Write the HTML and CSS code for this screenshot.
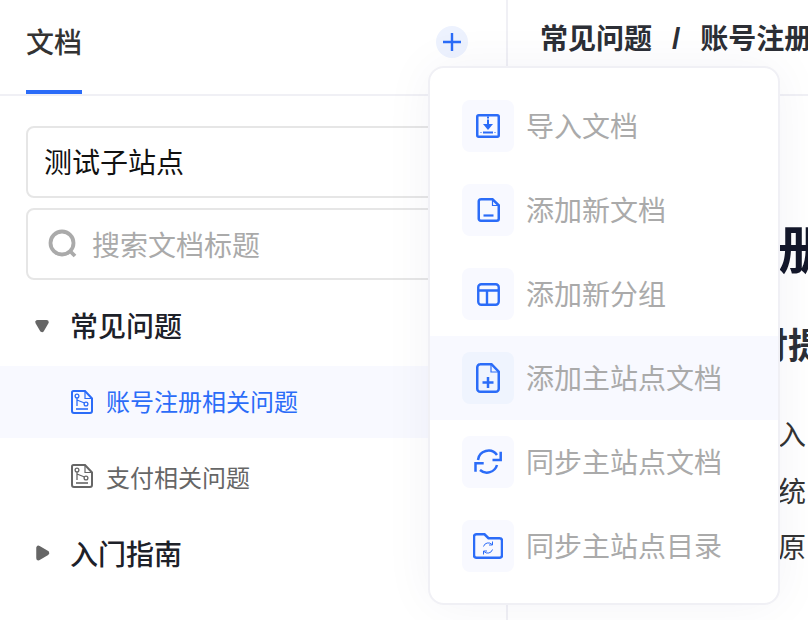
FILE: index.html
```html
<!DOCTYPE html>
<html lang="zh-CN">
<head>
<meta charset="utf-8">
<title>文档</title>
<link rel="stylesheet" href="styles.css">
</head>
<body>
<div class="app">
  <aside class="side">
    <header class="side-head">
      <div class="tab">文档</div>
      <button class="add" aria-label="添加">
        <svg width="18" height="18" viewBox="0 0 18 18"><path d="M9 0v18M0 9h18" stroke="#2b6cf8" stroke-width="2.400" fill="none"/></svg>
      </button>
    </header>
    <div class="filters">
      <div class="field field-site"><span class="label">测试子站点</span></div>
      <div class="field field-search">
        <svg width="30" height="30" viewBox="0 0 30 30"><circle cx="14" cy="14" r="11.500" stroke="#aaa" stroke-width="3.800" fill="none"/><path d="M22 22l5 5" stroke="#aaa" stroke-width="3.800" fill="none"/></svg>
        <span>搜索文档标题</span>
      </div>
    </div>
    <nav class="tree">
      <div class="group group-open">
        <svg class="caret caret-down" width="16" height="14" viewBox="0 0 16 14"><path d="M3.500 3.200h9L8 10.800z" fill="#666" stroke="#666" stroke-width="4.500" stroke-linejoin="round"/></svg>
        <span class="label-up-more">常见问题</span>
      </div>
      <div class="doc doc-active">
        <svg class="doc-icon" width="22" height="24" viewBox="0 0 22 24"><use href="#i-doc"/></svg>
        <span class="label-up">账号注册相关问题</span>
      </div>
      <div class="doc">
        <svg class="doc-icon" width="22" height="24" viewBox="0 0 22 24"><use href="#i-doc"/></svg>
        <span>支付相关问题</span>
      </div>
      <div class="group group-closed">
        <svg class="caret" width="16" height="18" viewBox="0 0 16 18"><path d="M3.500 3.800v10.400L12 9z" fill="#666" stroke="#666" stroke-width="4.500" stroke-linejoin="round"/></svg>
        <span>入门指南</span>
      </div>
    </nav>
  </aside>

  <main class="main">
    <header class="crumbs"><span>常见问题</span><span class="sep">/</span><span>账号注册相关问题</span></header>
    <article class="article">
      <h1>账号注册相关问题</h1>
      <h2>支付提示</h2>
      <p>入</p>
      <p>统</p>
      <p>原</p>
    </article>
  </main>

  <div class="menu">
    <div class="item">
      <span class="ico"><svg width="24" height="24" viewBox="0 0 24 24" fill="none" stroke="#2b6cf8" stroke-width="2.500"><rect x="1.250" y="1.250" width="21.500" height="21.500" rx="1.500"/><path d="M12 2.500v2M12 5.500v6" stroke-width="2"/><path d="M7 10h10l-5 6z" fill="#2b6cf8" stroke="none"/><path d="M7 18.500h10" stroke-width="2"/><path d="M4.500 18.500h1M18.500 18.500h1" stroke-width="1.200"/></svg></span>
      <span class="label">导入文档</span>
    </div>
    <div class="item">
      <span class="ico"><svg width="23" height="24" viewBox="0 0 23 24" fill="none" stroke="#2b6cf8" stroke-width="2.500"><path d="M3.500 1.250h12l6.250 6v13.500a2 2 0 0 1-2 2h-16a2 2 0 0 1-2-2v-17.500a2 2 0 0 1 2-2z"/><path d="M15.500 1.500v6h6" stroke-width="1.200"/><path d="M6.500 17.500h10" stroke-width="2.200"/></svg></span>
      <span class="label">添加新文档</span>
    </div>
    <div class="item">
      <span class="ico"><svg width="23" height="23" viewBox="0 0 23 23" fill="none" stroke="#2b6cf8" stroke-width="2.400"><rect x="1.250" y="1.250" width="20.500" height="20.500" rx="3"/><path d="M1.500 7.500h20M10 7.500V21.500"/></svg></span>
      <span class="label">添加新分组</span>
    </div>
    <div class="item item-hover">
      <span class="ico"><svg width="24" height="30" viewBox="0 0 24 30" fill="none" stroke="#2b6cf8" stroke-width="2.500"><path d="M4 1.250h11.500l7.250 7.500v17a3 3 0 0 1-3 3h-15.500a3 3 0 0 1-3-3v-21.500a3 3 0 0 1 3-3z"/><path d="M15 1.500v7.500h7.500" stroke-width="1.200"/><path d="M12 14v11M6.500 19.500h11"/></svg></span>
      <span class="label">添加主站点文档</span>
    </div>
    <div class="item">
      <span class="ico"><svg width="28" height="26" viewBox="0 0 28 26" fill="none" stroke="#2b6cf8" stroke-width="2.500"><path d="M4 11A10.500 10.500 0 0 1 23 6"/><path d="M23 16A10.500 10.500 0 0 1 6 21"/><path d="M26.700 2.700V11h-8.200"/><path d="M1.500 22.700v-8.400h8.200"/></svg></span>
      <span class="label">同步主站点文档</span>
    </div>
    <div class="item">
      <span class="ico"><svg width="30" height="26" viewBox="0 0 30 26" fill="none" stroke="#2b6cf8" stroke-width="2.500"><path d="M3.500 1.250h8l4 4h11a2.500 2.500 0 0 1 2.500 2.500v14.500a2.500 2.500 0 0 1-2.500 2.500h-23a2.500 2.500 0 0 1-2.500-2.500v-18.500a2.500 2.500 0 0 1 2.500-2.500z"/><path d="M10.500 13.500a5 5 0 0 1 8.500-2M19.500 16.500a5 5 0 0 1-8.500 2M19.500 8.500v3.500h-3.500M10.500 21.500v-3.500h3.500" stroke-width="1"/></svg></span>
      <span class="label">同步主站点目录</span>
    </div>
  </div>
</div>
<svg class="defs" width="0" height="0" aria-hidden="true">
  <symbol id="i-doc" viewBox="0 0 22 24">
    <g fill="none" stroke="currentColor">
      <path d="M2.500 1h11.500l7 7.500v12.500a2 2 0 0 1-2 2H3a2 2 0 0 1-2-2V2.500A1.500 1.500 0 0 1 2.500 1z" stroke-width="2"/>
      <path d="M14 1.500v7h6.500" stroke-width="1.200"/>
      <circle cx="6" cy="6" r="1.900" stroke-width="1.300"/>
      <circle cx="15" cy="14" r="1.900" stroke-width="1.300"/>
      <path d="M6 8v8M6 10l7.500 3" stroke-width="1.300"/>
      <path d="M5 19h12" stroke-width="1.600"/>
    </g>
  </symbol>
</svg>
</body>
</html>
```
FILE: styles.css
```css
* { box-sizing: border-box; }
html, body { margin: 0; height: 100%; }
body {
  width: 808px;
  height: 620px;
  overflow: hidden;
  background: #fff;
  font-family: "Noto Sans CJK SC", "Noto Sans", sans-serif;
}
.app { position: relative; display: flex; width: 808px; height: 620px; overflow: hidden; }
.side {
  flex: 0 0 508px;
  height: 620px;
  border-right: 2px solid #f0f0f5;
}
.side-head {
  display: flex;
  justify-content: space-between;
  height: 96px;
  padding: 0 38px 0 26px;
  border-bottom: 2px solid #f0f0f5;
}
.tab {
  width: 56px;
  height: 94px;
  padding-top: 21px;
  font-size: 28px;
  line-height: 40px;
  font-weight: 500;
  color: #333;
  border-bottom: 4px solid #2b6cf8;
}
.add {
  display: flex;
  align-items: center;
  justify-content: center;
  width: 32px;
  height: 32px;
  margin-top: 26px;
  padding: 0;
  border: 0;
  border-radius: 50%;
  background: #edf2fe;
}
.filters { display: flex; flex-direction: column; gap: 10px; padding: 30px 0 0 26px; }
.field {
  display: flex;
  align-items: center;
  height: 72px;
  width: 460px;
  border: 2px solid #e6e6e6;
  border-radius: 8px;
  font-size: 28px;
}
.field-site { padding-left: 16px; color: #111; }
.field-search { padding-left: 20px; gap: 14px; color: #aaa; }
.tree { padding-top: 10px; }
.group {
  display: flex;
  align-items: center;
  height: 76px;
  font-size: 28px;
  font-weight: 500;
  color: #1d2129;
}
.group-open { gap: 20px; padding-left: 34px; }
.group-closed { gap: 19px; padding-left: 35px; padding-top: 2px; }
.caret { flex: none; }
.caret-down { margin-bottom: 4px; }
.doc {
  display: flex;
  align-items: center;
  gap: 13px;
  height: 76px;
  padding-left: 71px;
  font-size: 24px;
  color: #666;
}
.doc-active { height: 72px; background: #f8f9ff; color: #2b6cf8; }
.doc-icon { flex: none; }
.label-up { padding-bottom: 4px; }
.label-up-more { padding-bottom: 7px; }
.label { padding-bottom: 3px; }
.main { flex: 1; height: 620px; min-width: 0; }
.crumbs {
  display: flex;
  align-items: center;
  gap: 20px;
  height: 96px;
  width: 700px;
  padding: 0 0 20px 32px;
  border-bottom: 2px solid #f0f0f5;
  font-size: 28px;
  font-weight: 700;
  color: #2c2f36;
  white-space: nowrap;
}
.sep { padding-top: 4px; font-family: "Liberation Sans", sans-serif; font-size: 30px; font-weight: 700; }
.article { padding-top: 121px; white-space: nowrap; }
.article h1 { margin: 0 0 0 114px; font-size: 52px; line-height: 60px; font-weight: 700; color: #14182a; }
.article h2 { margin: 41px 0 37px 208px; font-size: 36px; line-height: 50px; font-weight: 700; color: #2c2f36; }
.article p { margin: 0 0 0 270px; font-size: 28px; line-height: 56.500px; color: #333; }
.menu {
  position: absolute;
  left: 428px;
  top: 66px;
  width: 352px;
  height: 539px;
  padding: 16px 0;
  background: #fff;
  border: 2px solid #f0f0f5;
  border-radius: 16px;
  box-shadow: 0 0 50px rgba(30, 40, 90, 0.05);
}
.item {
  display: flex;
  align-items: center;
  gap: 12px;
  height: 84px;
  padding-left: 32px;
  font-size: 28px;
  color: #aaa;
}
.item-hover { background: #f8f9ff; }
.ico {
  display: flex;
  align-items: center;
  justify-content: center;
  flex: none;
  width: 52px;
  height: 52px;
  border-radius: 8px;
  background: #f8f9ff;
}
.item-hover .ico { background: #eff4fe; }
.defs { position: absolute; }
```
